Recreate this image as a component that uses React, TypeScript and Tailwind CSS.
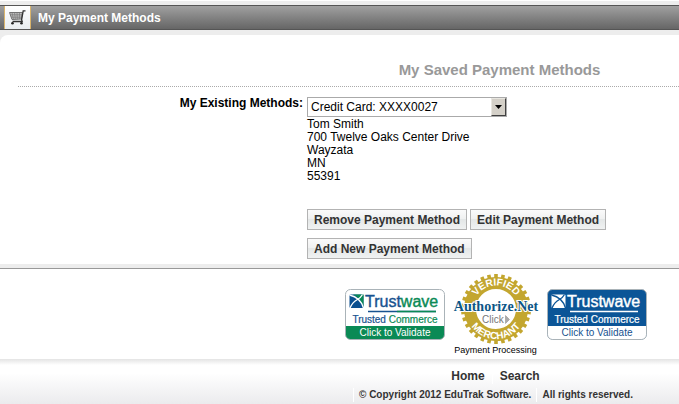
import { useState } from "react";
import type { ReactNode } from "react";

const METHODS = [
  {
    id: "0027",
    label: "Credit Card: XXXX0027",
    address: ["Tom Smith", "700 Twelve Oaks Center Drive", "Wayzata", "MN", "55391"],
  },
];

// gear teeth around the seal, one every 12 degrees
const TEETH = Array.from({ length: 30 }, (_, i) => i * 12);

function CartIcon() {
  return (
    <svg viewBox="0 0 17 15" className="h-[15px] w-[17px]" aria-hidden="true">
      <path d="M.5 2.5h13l-1.200 6.500-9.300.5z" fill="#ccc" stroke="#666" strokeWidth="0.900" />
      <path
        d="M1 4.300h12M1.700 6h11M2.400 7.700h10M3 2.500l1.500 7M5.500 2.500l.9 7M8 2.500l.3 6.800M10.500 2.500l-.2 6.600"
        stroke="#777"
        strokeWidth="0.700"
      />
      <path d="M16.500.8h-2.300l-1.600 9 .6 1.700H3.500" fill="none" stroke="#333" strokeWidth="1.300" />
      <circle cx="3.500" cy="13.300" r="1.300" fill="#222" />
      <circle cx="12.500" cy="13.300" r="1.300" fill="#222" />
    </svg>
  );
}

function TrustwaveSeal({ variant }: { variant: "green" | "blue" }) {
  const blue = variant === "blue";
  const first = blue ? "#fff" : "#17528f";
  const second = blue ? "#fff" : "#0a8a55";
  return (
    <svg
      viewBox="0 0 100 51"
      className="h-[51px] w-[100px]"
      role="img"
      aria-label="Trustwave Trusted Commerce"
      fontFamily="Liberation Sans, Arial, sans-serif"
    >
      <rect x="0.5" y="0.5" width="99" height="50" rx="5" fill={blue ? "#0b5597" : "#fff"} />
      <path d="M.5 37h99v8.500a5 5 0 0 1-5 5h-89a5 5 0 0 1-5-5z" fill={blue ? "#fff" : "#0a8a55"} />
      <rect x="0.5" y="0.5" width="99" height="50" rx="5" fill="none" stroke="#aab3b8" />
      {/* wave mark */}
      <rect x="4.500" y="5.500" width="14" height="13.500" rx="1" fill={blue ? "#fff" : "#0b4f8f"} />
      {!blue && <path d="M8 5.500h10.500v13q-2-9-10.500-13z" fill="#0a8a55" />}
      <path
        d="M4.500 6q11 2.500 14 13M5 19q2.500-6 7.500-8.500 3-1.500 5-5"
        fill="none"
        stroke={blue ? "#0b5597" : "#fff"}
        strokeWidth="1.300"
      />
      <text x="20" y="18" fontSize="16" fill={first} stroke={first} strokeWidth="0.400">
        Trust
        <tspan fill={second} stroke={second}>wave</tspan>
      </text>
      <path d="M23 22.500h68" stroke={first} strokeWidth="1.500" />
      {!blue && <path d="M52 22.500h39" stroke={second} strokeWidth="1.500" />}
      <text x="50" y="34" fontSize="10" textAnchor="middle" fill={first} stroke={first} strokeWidth="0.200">
        Trusted{" "}
        <tspan fill={second} stroke={second}>Commerce</tspan>
      </text>
      <text x="50" y="47" fontSize="10" textAnchor="middle" fill={blue ? "#17528f" : "#fff"}>
        Click to Validate
      </text>
    </svg>
  );
}

function AuthorizeSeal() {
  return (
    <svg viewBox="0 0 90 72" className="h-[72px] w-[90px]" role="img" aria-label="Authorize.Net Verified Merchant">
      <defs>
        <path id="seal-top" d="M21.500 36a23.500 23.500 0 0 1 47 0" />
        <path id="seal-bottom" d="M15 36a30 30 0 0 0 60 0" />
      </defs>
      {TEETH.map((deg) => (
        <rect key={deg} x="43.200" y="1" width="3.600" height="6" fill="#c3a62f" transform={`rotate(${deg} 45 36)`} />
      ))}
      <circle cx="45" cy="36" r="26" fill="#fff" stroke="#c3a62f" strokeWidth="12" />
      <g fontFamily="Liberation Sans, Arial, sans-serif" fontSize="10" fontWeight="bold" fill="#fff" textAnchor="middle">
        <text>
          <textPath href="#seal-top" startOffset="50%">VERIFIED</textPath>
        </text>
        <text>
          <textPath href="#seal-bottom" startOffset="50%">MERCHANT</textPath>
        </text>
      </g>
      <text
        x="45"
        y="38"
        fontSize="14"
        fontWeight="bold"
        fontFamily="Liberation Serif, Times New Roman, serif"
        textAnchor="middle"
        fill="#0d5686"
        stroke="#fff"
        strokeWidth="2"
        paintOrder="stroke"
      >
        Authorize.Net
      </text>
      <text x="31" y="50" fontSize="10" fontFamily="Liberation Sans, Arial, sans-serif" fill="#777">
        Click
      </text>
      <path d="M54.500 42.500v8l4-4z" fill="#aaa" stroke="#888" strokeWidth="0.500" />
    </svg>
  );
}

function ActionButton({ children }: { children: ReactNode }) {
  return (
    <button
      type="button"
      className="h-[21px] border border-[#b3b3b3] bg-[linear-gradient(#fafafa,#f0f1f1_45%,#e4e7e7_50%,#f0f2f2)] px-1.5 text-xs leading-4 font-bold text-[#333]"
    >
      {children}
    </button>
  );
}

export default function App() {
  const [selected, setSelected] = useState(METHODS[0].id);
  const method = METHODS.find((m) => m.id === selected) ?? METHODS[0];

  return (
    <div className="min-h-screen overflow-hidden border-t border-white bg-[#ededed] font-['Liberation_Sans',Arial,sans-serif] text-xs text-black">
      <header className="mt-1 flex h-[25px] items-center border-y border-[#555] bg-linear-to-b from-[#a0a0a0] to-[#666]">
        <span className="ml-1 flex h-[23px] w-[27px] items-center justify-center border-x border-[#d9b46c] bg-linear-to-b from-white to-[#e9edf0]">
          <CartIcon />
        </span>
        <h1 className="ml-[7px] font-bold text-white">My Payment Methods</h1>
      </header>

      <main className="mt-[5px] rounded-tl-lg bg-white pb-[5px]">
        <h2 className="ml-[18px] border-b border-dotted border-[#aaa] pt-[25px] pb-[6px] pl-[302px] text-center text-[15px] leading-5 font-bold text-[#999]">
          My Saved Payment Methods
        </h2>

        <div className="flex gap-1 pt-[10px]">
          <label htmlFor="method" className="w-[303px] shrink-0 text-right leading-[13px] font-bold">
            My Existing Methods:
          </label>
          <div>
            <div className="relative w-[200px]">
              <select
                id="method"
                value={selected}
                onChange={(e) => setSelected(e.target.value)}
                className="block h-5 w-full appearance-none border border-[#aaa] bg-white pl-[3px] text-xs"
              >
                {METHODS.map((m) => (
                  <option key={m.id} value={m.id}>
                    {m.label}
                  </option>
                ))}
              </select>
              <span className="pointer-events-none absolute inset-y-px right-px flex w-[15px] items-center justify-center border border-t-[#e8e6e0] border-r-[#404040] border-b-[#404040] border-l-[#e8e6e0] bg-[#d4d0c8]">
                <svg viewBox="0 0 7 4" className="h-1 w-[7px]" aria-hidden="true">
                  <path d="M0 0h7L3.500 4z" />
                </svg>
              </span>
            </div>
            <address className="mt-px leading-[13px] not-italic">
              {method.address.map((line) => (
                <div key={line}>{line}</div>
              ))}
            </address>

            <div className="mt-[26px] flex gap-[3px]">
              <ActionButton>Remove Payment Method</ActionButton>
              <ActionButton>Edit Payment Method</ActionButton>
            </div>
            <div className="mt-2">
              <ActionButton>Add New Payment Method</ActionButton>
            </div>
          </div>
        </div>
      </main>

      <section className="mt-1 flex justify-center gap-1.5 border-t border-[#999] bg-white pt-1 pb-[3px] pl-[312px]">
        <a href="#trustwave" className="mt-4">
          <TrustwaveSeal variant="green" />
        </a>
        <div className="flex flex-col items-center">
          <a href="#authorize">
            <AuthorizeSeal />
          </a>
          <a href="#processing" className="text-[9px] leading-[11px]">
            Payment Processing
          </a>
        </div>
        <a href="#trustwave-blue" className="mt-4">
          <TrustwaveSeal variant="blue" />
        </a>
      </section>

      <footer className="bg-[linear-gradient(#e4e4e4,#fff_6px,#fff_14px,#ebebed_45px)] pt-[9px] pb-1 pl-[312px] text-center font-bold text-[#333]">
        <nav className="flex justify-center leading-4">
          <a href="#home" className="border-r border-white px-[7px]">
            Home
          </a>
          <a href="#search" className="px-[7px]">
            Search
          </a>
        </nav>
        <p className="mt-1 flex justify-center text-[10px] leading-[14px]">
          <span className="border-x border-white px-[5px]">© Copyright 2012 EduTrak Software.</span>
          <span className="px-[5px]">All rights reserved.</span>
        </p>
      </footer>
    </div>
  );
}
